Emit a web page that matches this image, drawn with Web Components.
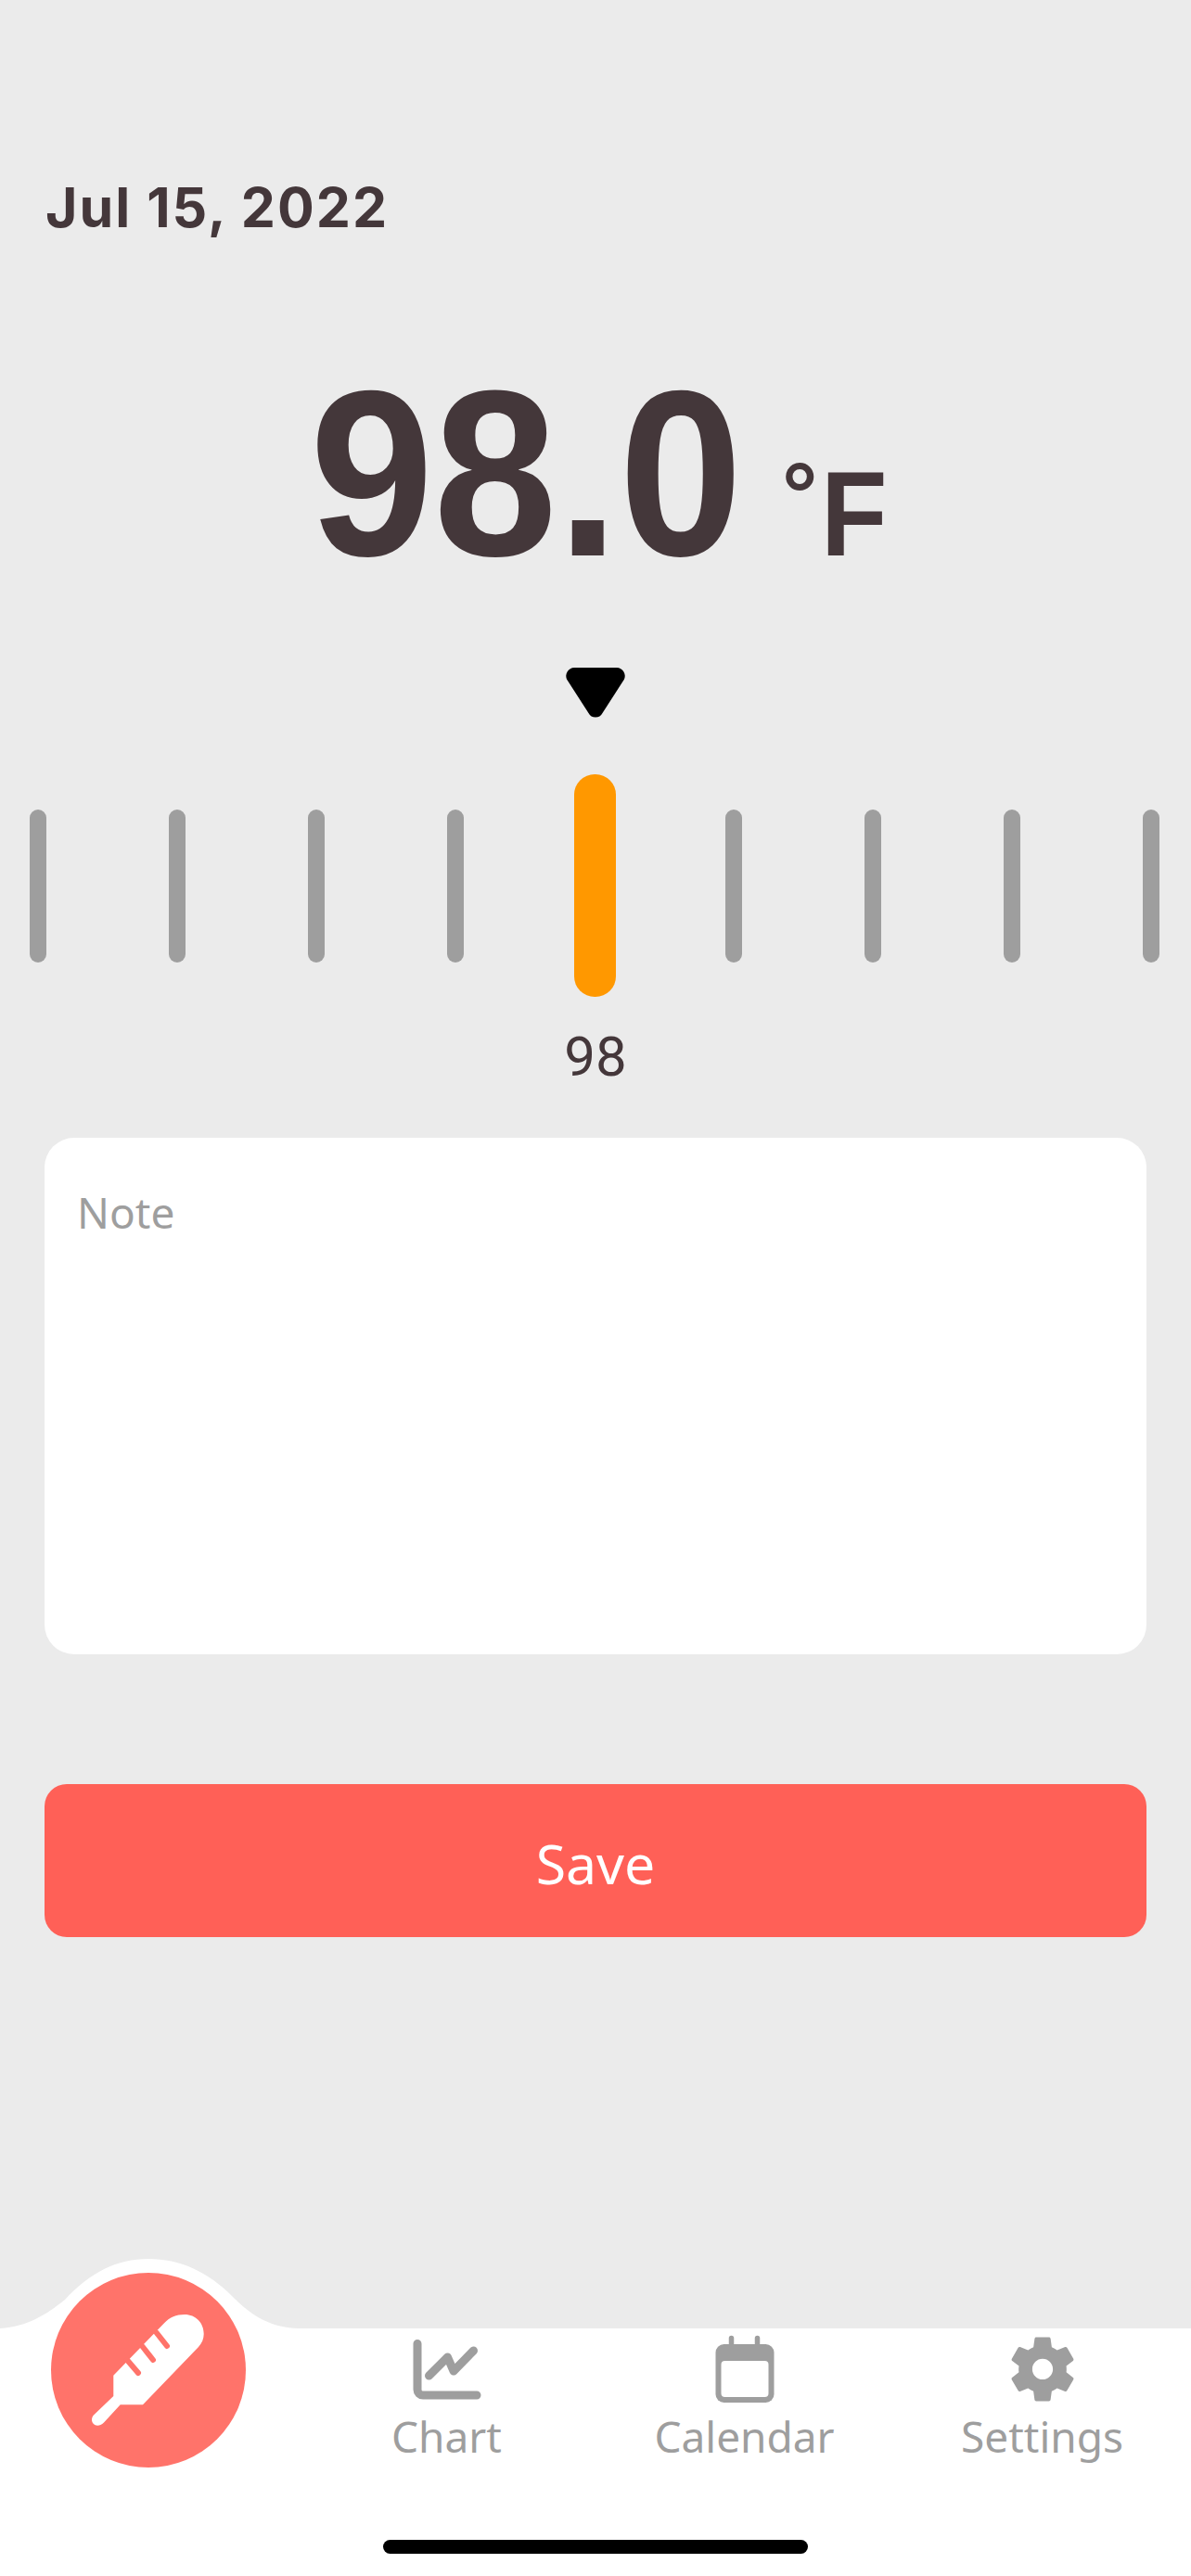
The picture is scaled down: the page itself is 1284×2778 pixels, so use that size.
<!DOCTYPE html>
<html>
<head>
<meta charset="utf-8">
<title>Temperature</title>
<style>
    html, body { margin: 0; padding: 0; background: #ebebeb; }
</style>
</head>
<body>
<temp-screen>
    <date-header>Jul 15, 2022</date-header>
    <temp-readout value="98.0" unit="F"></temp-readout>
    <temp-ruler value="98"></temp-ruler>
    <note-box placeholder="Note"></note-box>
    <save-button>Save</save-button>
    <tab-bar>
        <tab-item label="Chart" icon="chart"></tab-item>
        <tab-item label="Calendar" icon="calendar"></tab-item>
        <tab-item label="Settings" icon="settings"></tab-item>
    </tab-bar>
</temp-screen>

<script>
class TempScreen extends HTMLElement {
    constructor() {
        super();
        this.attachShadow({ mode: "open" }).innerHTML = `
            <style>
                :host {
                    display: flex;
                    flex-direction: column;
                    width: 1284px;
                    height: 2778px;
                    overflow: hidden;
                    background: #ebebeb;
                    color: #44373a;
                }
            </style>
            <slot></slot>
        `;
    }
}

class DateHeader extends HTMLElement {
    constructor() {
        super();
        this.attachShadow({ mode: "open" }).innerHTML = `
            <style>
                :host {
                    display: block;
                    height: 60px;
                    margin: 194px 0 0 49px;
                    font: 700 59px/60px Inter, "Liberation Sans", sans-serif;
                    letter-spacing: 2px;
                }
            </style>
            <slot></slot>
        `;
    }
}

class TempReadout extends HTMLElement {
    constructor() {
        super();
        const unit = this.getAttribute("unit");
        this.attachShadow({ mode: "open" }).innerHTML = `
            <style>
                :host {
                    display: flex;
                    align-items: baseline;
                    height: 260px;
                    margin-top: 142px;
                    padding-left: 334px;
                    font-weight: 700;
                    line-height: 230px;
                    font-family: "Liberation Sans", sans-serif;
                }
                .value {
                    display: block;
                    width: 459px;
                    font-size: 255px;
                    transform: scaleX(.94);
                    transform-origin: 0 50%;
                    white-space: nowrap;
                }
                .deg {
                    margin-left: 50px;
                    font-size: 96px;
                    position: relative;
                    top: -32px;
                }
                .unit {
                    display: block;
                    margin-left: 4px;
                    font-size: 130px;
                    transform: scaleX(.9);
                    transform-origin: 0 50%;
                }
            </style>
            <span class="value">${this.getAttribute("value")}</span>
            <span class="deg">°</span><span class="unit">${unit}</span>
        `;
    }
}

class TempRuler extends HTMLElement {
    constructor() {
        super();
        const ticks = [];
        for (let i = 0; i < 9; i++) {
            ticks.push(`<div class="tick ${i === 4 ? "active" : ""}"></div>`);
        }
        this.attachShadow({ mode: "open" }).innerHTML = `
            <style>
                :host {
                    display: flex;
                    flex-direction: column;
                    align-items: center;
                    margin-top: 64px;
                }
                svg { display: block; width: 64px; height: 54px; }
                .ticks {
                    display: grid;
                    grid-template-columns: repeat(9, 150px);
                    justify-items: center;
                    align-items: center;
                    height: 240px;
                    margin: 61px 2px 0 0;
                }
                .tick {
                    width: 18px;
                    height: 165px;
                    border-radius: 9px;
                    background: #9e9e9e;
                }
                .tick.active {
                    width: 45px;
                    height: 240px;
                    border-radius: 22px;
                    background: #ff9800;
                }
                .label {
                    margin-top: 30px;
                    font: 400 60px/70px Roboto, "Liberation Sans", sans-serif;
                }
            </style>
            <svg viewBox="0 0 64 54">
                <path d="M9 0h46a9 9 0 0 1 8 12.500L39.500 49a8.500 8.500 0 0 1-15 0L1 12.500A9 9 0 0 1 9 0z" fill="#000"/>
            </svg>
            <div class="ticks">${ticks.join("")}</div>
            <div class="label">${this.getAttribute("value")}</div>
        `;
    }
}

class NoteBox extends HTMLElement {
    constructor() {
        super();
        this.attachShadow({ mode: "open" }).innerHTML = `
            <style>
                :host {
                    display: block;
                    box-sizing: border-box;
                    height: 557px;
                    margin: 52px 48px 0;
                    padding: 50px 35px;
                    border-radius: 32px;
                    background: #fff;
                    color: #9e9e9e;
                    font: 400 46px/60px "Noto Sans", sans-serif;
                }
            </style>
            ${this.getAttribute("placeholder")}
        `;
    }
}

class SaveButton extends HTMLElement {
    constructor() {
        super();
        this.attachShadow({ mode: "open" }).innerHTML = `
            <style>
                :host {
                    display: flex;
                    align-items: center;
                    justify-content: center;
                    box-sizing: border-box;
                    height: 165px;
                    margin: 140px 48px 0;
                    padding-top: 4px;
                    border-radius: 24px;
                    background: #ff6057;
                    color: #fff;
                    font: 400 59px/70px "Noto Sans", sans-serif;
                }
            </style>
            <slot></slot>
        `;
    }
}

const TAB_ICONS = {
    chart: `<svg viewBox="0 0 86 86" fill="none" stroke="#9e9e9e" stroke-linecap="round" stroke-linejoin="round">
        <path d="M11 10.500V60a6 6 0 0 0 6 6H75" stroke-width="9"/>
        <path d="M23.500 45L43.500 25L50 40L71.500 18" stroke-width="9"/>
    </svg>`,
    calendar: `<svg viewBox="0 0 86 86" fill="none">
        <path d="M28.500 14V4.500M56.500 14V4.500" stroke="#9e9e9e" stroke-width="5.500" stroke-linecap="round"/>
        <rect x="11.500" y="11" width="63" height="63" rx="9" fill="#9e9e9e"/>
        <rect x="17.500" y="29" width="51" height="39" rx="4" fill="#fff"/>
    </svg>`,
    settings: `<svg viewBox="0 1.400 24 24" fill="#9e9e9e"><path fill-rule="evenodd" d="M19.140 12.940c.04-.3.06-.61.06-.94 0-.32-.02-.64-.07-.94l2.030-1.580c.18-.14.23-.41.12-.61l-1.920-3.320c-.12-.22-.37-.29-.59-.22l-2.390.96c-.5-.38-1.030-.7-1.620-.94l-.36-2.540c-.04-.24-.24-.41-.48-.41h-3.840c-.24 0-.43.17-.47.41l-.36 2.540c-.59.24-1.130.57-1.620.94l-2.390-.96c-.22-.08-.47 0-.59.22L2.740 8.870c-.12.21-.08.47.12.61l2.030 1.580c-.05.3-.09.63-.09.94s.02.64.07.94l-2.030 1.580c-.18.14-.23.41-.12.61l1.920 3.320c.12.22.37.29.59.22l2.390-.96c.5.38 1.030.7 1.620.94l.36 2.540c.05.24.24.41.48.41h3.840c.24 0 .44-.17.47-.41l.36-2.540c.59-.24 1.130-.56 1.620-.94l2.390.96c.22.08.47 0 .59-.22l1.920-3.320c.12-.22.07-.47-.12-.61l-2.010-1.580zM12 15.100c-1.710 0-3.100-1.390-3.100-3.100s1.390-3.100 3.100-3.100 3.100 1.390 3.100 3.100-1.390 3.100-3.100 3.100z"/></svg>`
};

class TabItem extends HTMLElement {
    constructor() {
        super();
        this.attachShadow({ mode: "open" }).innerHTML = `
            <style>
                :host {
                    display: flex;
                    flex-direction: column;
                    align-items: center;
                    color: #9e9e9e;
                    font: 400 46px/62px "Noto Sans", sans-serif;
                }
                svg { display: block; width: 86px; height: 86px; margin-bottom: -7px; }
            </style>
            ${TAB_ICONS[this.getAttribute("icon")]}
            <span>${this.getAttribute("label")}</span>
        `;
    }
}

class TabBar extends HTMLElement {
    constructor() {
        super();
        this.attachShadow({ mode: "open" }).innerHTML = `
            <style>
                :host {
                    display: block;
                    position: relative;
                    height: 267px;
                    margin-top: auto;
                    background: #fff;
                }
                .bump {
                    position: absolute;
                    left: 0;
                    top: -75px;
                    width: 340px;
                    height: 76px;
                }
                .items {
                    display: grid;
                    grid-template-columns: repeat(4, 321px);
                    padding-top: 6px;
                }
                .fab {
                    position: relative;
                    display: flex;
                    align-items: center;
                    justify-content: center;
                    width: 210px;
                    height: 210px;
                    margin: -66px 0 0 55px;
                    border-radius: 50%;
                    background: #ff736a;
                }
                .fab svg { display: block; width: 210px; height: 210px; }
                .home {
                    position: absolute;
                    left: 413px;
                    top: 228px;
                    width: 458px;
                    height: 15px;
                    border-radius: 8px;
                    background: #000;
                }
            </style>
            <svg class="bump" viewBox="0 0 340 76">
                <path d="M0 75C30 73 50 60 70 44C98 14 126 0 160 0C194 0 224 14 250 40C272 62 292 74 322 75L340 76H0Z" fill="#fff"/>
            </svg>
            <div class="items">
                <div class="fab">
                    <svg viewBox="56 51 210 210">
                        <path d="M123.300 161.700L178.300 105C184 99 191 96 200 96C212 96 220.700 105 220.700 117C220.700 122 218.700 127 215 131L155 193.300H130.700L113 212.500C108 217.500 103 216 101 213C99 210 100 206 103 203.500L123.300 184Z" fill="#fff"/>
                        <path d="M138 145L150 159M155 131L166 145M170 116L181 130" fill="none" stroke="#ff736a" stroke-width="6" stroke-linecap="round"/>
                    </svg>
                </div>
                <slot></slot>
            </div>
            <div class="home"></div>
        `;
    }
}

window.customElements.define("temp-screen", TempScreen);
window.customElements.define("date-header", DateHeader);
window.customElements.define("temp-readout", TempReadout);
window.customElements.define("temp-ruler", TempRuler);
window.customElements.define("note-box", NoteBox);
window.customElements.define("save-button", SaveButton);
window.customElements.define("tab-item", TabItem);
window.customElements.define("tab-bar", TabBar);
</script>
</body>
</html>
